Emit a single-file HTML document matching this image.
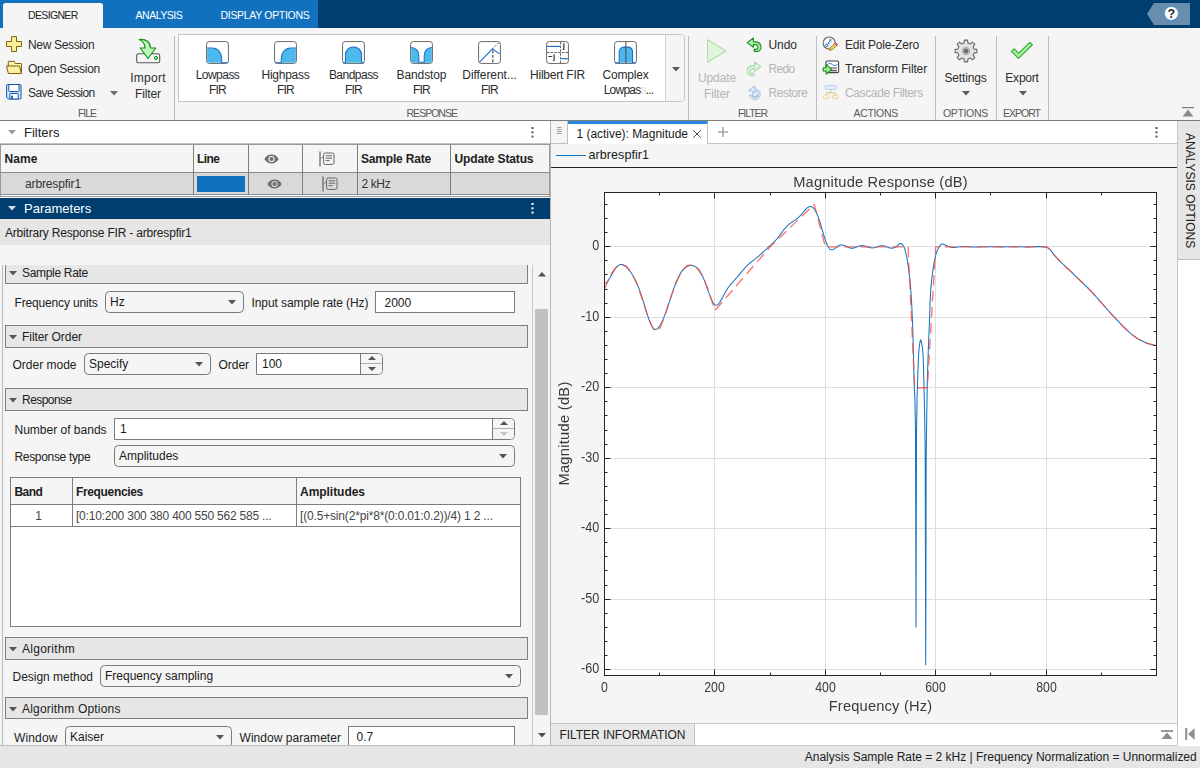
<!DOCTYPE html>
<html lang="en"><head>
<meta charset="utf-8">
<title>Filter Designer</title>
<style>
*{box-sizing:border-box;margin:0;padding:0}
html,body{width:1200px;height:768px;overflow:hidden}
body{position:relative;background:#f5f5f5;font-family:"Liberation Sans",sans-serif;font-size:12px;color:#212121}
.a{position:absolute}
.t{position:absolute;white-space:nowrap;line-height:16px;height:16px}
.c{text-align:center}
svg{position:absolute;overflow:visible}
/* tab strip */
#tabs{left:0;top:0;width:1200px;height:28px;background:#003e70}
#tabsblue{left:0;top:0;width:318px;height:28px;background:#1171be}
#tabact{left:3px;top:3px;width:100px;height:25px;background:#f5f5f5;border-radius:2.5px 2.5px 0 0}
.tabt{color:#fff;font-size:10.5px;top:7px}
/* ribbon */
#ribbon{left:0;top:28px;width:1200px;height:93px;background:#f5f5f5;border-bottom:1px solid #7d7d7d;color:#2c2c2c}
.vsep{position:absolute;top:8px;width:1px;height:84px;background:#bdbdbd}
.sec{color:#5a5a5a;font-size:10.5px;top:77px}
.dis{color:#b4b4b4}
#gal{left:178px;top:6px;width:507px;height:68px;border:1px solid #c4c4c4;border-radius:0 4px 4px 0;background:#fff}
#galbtn{right:0;top:0;width:19px;height:66px;background:#f5f5f5;border-left:1px solid #d0d0d0;border-radius:0 3px 3px 0}
.gi{position:absolute;top:6px;width:23px;height:23px}
/* panels */
#left{left:0;top:0;width:551px;height:746px;overflow:hidden}
#right{left:0;top:0;width:1177px;height:746px;overflow:hidden}
#side{left:1177px;top:121px;width:23px;height:625px;background:#fff;border-left:1px solid #c6c6c6}
.sh{position:absolute;left:5px;width:523px;height:23px;background:#e6e6e6;border:1px solid #7f7f7f}
.sh svg{left:3.3px;top:8.5px}
.sh .t{left:16px;top:2.5px}
.dd{position:absolute;height:22px;border:1px solid #7a7a7a;border-radius:4.5px;background:#f5f5f5}
.dd .t{left:4px;top:1.5px;color:#1a1a1a}
.dd svg{right:7.5px;top:7.8px}
.tf{position:absolute;height:22px;border:1px solid #7a7a7a;background:#fff}
.tf .t{top:2px;color:#1a1a1a}
.spb{position:absolute;right:0;top:0;width:22px;height:20px;border-left:1px solid #7a7a7a;background:#f5f5f5;border-radius:0 4px 4px 0}
.spb i{position:absolute;left:0;top:9px;width:21px;height:1px;background:#b0b0b0}
.b{font-weight:bold}
.hl{position:absolute;height:1px;background:#7d7d7d}
.vl{position:absolute;width:1px;background:#7d7d7d}
#status{left:0;top:746px;width:1200px;height:22px;background:#e6e6e6}
</style>
</head>
<body>
<!--TABS-->
<div id="tabs" class="a">
  <div id="tabsblue" class="a"></div>
  <div id="tabact" class="a"></div>
  <div class="t" style="left: 28px; top: 7px; color: rgb(34, 34, 34); font-size: 10.5px; letter-spacing: -0.65px;">DESIGNER</div>
  <div class="t tabt" style="left: 135.5px; letter-spacing: -0.48px;">ANALYSIS</div>
  <div class="t tabt" style="left: 220.5px; letter-spacing: -0.31px;">DISPLAY OPTIONS</div>
  <svg style="left:1146px;top:3px" width="45" height="22" viewBox="0 0 45 22">
    <path d="M1 11 L8 0 H44 V22 H8 Z" fill="#688daf"></path>
    <circle cx="25.4" cy="10.4" r="7" fill="#fff" stroke="#3b8ad6" stroke-width="0.8"></circle>
    <text x="25.4" y="14.6" font-size="12.5" font-weight="bold" text-anchor="middle" fill="#222" font-family="Liberation Sans, sans-serif">?</text>
  </svg>
</div>
<!--RIBBON-->
<div id="ribbon" class="a">
  <!-- FILE section (coords relative to ribbon top=28) -->
  <svg style="left:6.2px;top:8px" width="16" height="16" viewBox="0 0 16 16"><path d="M5.5.6h5v4.9h5v5h-5v5h-5v-5h-5v-5h5z" fill="#fdee9c" stroke="#7f6108" stroke-width="1" stroke-linejoin="round"></path></svg>
  <div class="t" style="left: 28px; top: 8.5px; letter-spacing: -0.34px;">New Session</div>
  <svg style="left:6px;top:32px" width="16" height="16" viewBox="0 0 16 16"><path d="M2.3 6.4V1.8a.5.5 0 0 1 .5-.5h5.4L9.2 3.5h5.8a.5.5 0 0 1 .5.5v9.4" fill="#fdf2ae" stroke="#7f6108" stroke-width="1" stroke-linejoin="round"></path><path d="M.5 6h13L15.4 13.5H2.4z" fill="#fdf0a6" stroke="#7f6108" stroke-width="1" stroke-linejoin="round"></path></svg>
  <div class="t" style="left: 28px; top: 32.5px; letter-spacing: -0.29px;">Open Session</div>
  <svg style="left:6px;top:56px" width="16" height="16" viewBox="0 0 16 16"><path d="M1.4.5h12.8a.8.8 0 0 1 .8.8v12.9a.8.8 0 0 1-.8.8H2.3L.6 13.2V1.3a.8.8 0 0 1 .8-.8z" fill="#cfe6fb" stroke="#1557b0" stroke-width="1" stroke-linejoin="round"></path><path d="M2.8.5v6.4a.6.6 0 0 0 .6.6h9a.6.6 0 0 0 .6-.6V.5z" fill="#fff" stroke="#1557b0" stroke-width="1"></path><path d="M3.8 15v-4.9a.6.6 0 0 1 .6-.6h7.2a.6.6 0 0 1 .6.6V15z" fill="#fff" stroke="#1557b0" stroke-width="1"></path><rect x="5.1" y="11.6" width="1.8" height="3.2" fill="#1557b0"></rect></svg>
  <div class="t" style="left: 28px; top: 56.5px; letter-spacing: -0.56px;">Save Session</div>
  <svg style="left:109.7px;top:62.5px" width="8" height="5" viewBox="0 0 8 5"><path d="M0 0h8L4 4.6z" fill="#6a6a6a"></path></svg>
  <!-- Import Filter -->
  <svg style="left:135px;top:10px" width="26" height="26" viewBox="0 0 26 26"><rect x="1.7" y="15.7" width="23" height="9.1" rx="1.8" fill="#f5f5f5" stroke="#5a5a5a" stroke-width="1.1"></rect><circle cx="21" cy="20" r="1.6" fill="#8fe78f" stroke="#1a961a" stroke-width="1"></circle><path d="M4.2 1.5C11 .7 15.3 4 15.5 10H20.8L13 20.5 5.2 10H10C9.8 6 8 3 4.2 1.5z" fill="#bff5b6" stroke="#12901a" stroke-width="1.1" stroke-linejoin="round"></path></svg>
  <div class="t c" style="left: 118px; width: 60px; top: 42px; letter-spacing: 0.27px;">Import</div>
  <div class="t c" style="left: 118px; width: 60px; top: 57.5px; letter-spacing: -0.12px;">Filter</div>
  <div class="t sec" style="left: 78px; letter-spacing: -1.05px;">FILE</div>
  <div class="vsep" style="left:174px"></div>
  <!-- gallery -->
  <div id="gal" class="a">
    <div id="galbtn" class="a"><svg style="left:5.5px;top:31.5px" width="8" height="5" viewBox="0 0 8 5"><path d="M0 0h8L4 4.6z" fill="#5a5a5a"></path></svg></div>
        <!-- gallery coords relative to gal box (left 178+1 border, top 34+1) ; item centers at page x 217.5+68k -->
    <svg class="gi" style="left:27.0px" viewBox="0 0 24 24"><rect x=".6" y=".6" width="22.8" height="22.8" rx="2.8" fill="#fff" stroke="#636363" stroke-width="1"></rect><path d="M1.2 7.6h5.4c5.6 0 9.8 4.4 9.8 10.4v4.8H3.2a2 2 0 0 1-2-2z" fill="#4db8ec"></path><path d="M1.2 7.4h5.4c5.6 0 9.8 4.6 9.8 10.6v4.6h6.4" fill="none" stroke="#1b70c4" stroke-width="1.1"></path></svg>
    <div class="t c" style="left: 3.5px; width: 70px; top: 31.5px; letter-spacing: -0.52px;">Lowpass</div>
    <div class="t c" style="left: 3.5px; width: 70px; top: 46.5px; letter-spacing: -0.74px;">FIR</div>

    <svg class="gi" style="left:95.0px" viewBox="0 0 24 24"><rect x=".6" y=".6" width="22.8" height="22.8" rx="2.8" fill="#fff" stroke="#636363" stroke-width="1"></rect><path d="M22.8 7.6h-5.4c-5.6 0-9.8 4.4-9.8 10.4v4.8h13.2a2 2 0 0 0 2-2z" fill="#4db8ec"></path><path d="M22.8 7.4h-5.4c-5.6 0-9.8 4.6-9.8 10.6v4.6H1.2" fill="none" stroke="#1b70c4" stroke-width="1.1"></path></svg>
    <div class="t c" style="left: 71.5px; width: 70px; top: 31.5px; letter-spacing: -0.27px;">Highpass</div>
    <div class="t c" style="left: 71.5px; width: 70px; top: 46.5px; letter-spacing: -0.74px;">FIR</div>

    <svg class="gi" style="left:163.0px" viewBox="0 0 24 24"><rect x=".6" y=".6" width="22.8" height="22.8" rx="2.8" fill="#fff" stroke="#636363" stroke-width="1"></rect><path d="M3.6 22.8v-8.2c0-5 3.6-8.4 8.4-8.4s8.4 3.4 8.4 8.4v8.2z" fill="#4db8ec"></path><path d="M1.2 22.8h2.4v-8.2c0-5 3.6-8.4 8.4-8.4s8.4 3.4 8.4 8.4v8.2h2.4" fill="none" stroke="#1b70c4" stroke-width="1.1"></path></svg>
    <div class="t c" style="left: 139.5px; width: 70px; top: 31.5px; letter-spacing: -0.52px;">Bandpass</div>
    <div class="t c" style="left: 139.5px; width: 70px; top: 46.5px; letter-spacing: -0.74px;">FIR</div>

    <svg class="gi" style="left:231.0px" viewBox="0 0 24 24"><rect x=".6" y=".6" width="22.8" height="22.8" rx="2.8" fill="#fff" stroke="#636363" stroke-width="1"></rect><path d="M1.2 6.8c5 0 8 3.8 8 9v6.4h5.6v-6.4c0-5.2 3-9 8-9v14a2 2 0 0 1-2 2H3.2a2 2 0 0 1-2-2z" fill="#4db8ec"></path><path d="M1.2 6.8c5 0 8 3.8 8 9v6.4h5.6v-6.4c0-5.2 3-9 8-9" fill="none" stroke="#1b70c4" stroke-width="1.1"></path></svg>
    <div class="t c" style="left: 207.5px; width: 70px; top: 31.5px; letter-spacing: -0.1px;">Bandstop</div>
    <div class="t c" style="left: 207.5px; width: 70px; top: 46.5px; letter-spacing: -0.74px;">FIR</div>

    <svg class="gi" style="left:299.0px" viewBox="0 0 24 24"><rect x=".6" y=".6" width="22.8" height="22.8" rx="2.8" fill="#fff" stroke="#636363" stroke-width="1"></rect><path d="M1.6 22L15 8.4l7.6 5" fill="none" stroke="#1b70c4" stroke-width="1.1"></path><path d="M15 8.4L21.6 1.8" fill="none" stroke="#1b70c4" stroke-width="1" stroke-dasharray="2.2 1.4"></path><path d="M15.5 10v12.6" fill="none" stroke="#222" stroke-width="1" stroke-dasharray="3 1.6"></path></svg>
    <div class="t c" style="left: 275.5px; width: 70px; top: 31.5px; letter-spacing: -0.06px;">Different...</div>
    <div class="t c" style="left: 275.5px; width: 70px; top: 46.5px; letter-spacing: -0.74px;">FIR</div>

    <svg class="gi" style="left:367.0px" viewBox="0 0 24 24"><rect x=".6" y=".6" width="22.8" height="22.8" rx="2.8" fill="#fff" stroke="#636363" stroke-width="1"></rect><path d="M15.2 1v22" stroke="#5a5a5a" stroke-width="1" stroke-dasharray="2.6 1.3"></path><path d="M1 12h22" stroke="#5a5a5a" stroke-width="1" stroke-dasharray="2.6 1.3"></path><path d="M1.2 5.6H14.6" stroke="#0f6fc0" stroke-width="1.2"></path><path d="M15.8 18.5h7" stroke="#0f6fc0" stroke-width="1.2"></path><text x="17.6" y="7.7" font-size="8" font-weight="bold" fill="#1a1a1a" font-family="Liberation Sans, sans-serif">j</text><text x="2" y="19.2" font-size="8" font-weight="bold" fill="#1a1a1a" font-family="Liberation Sans, sans-serif" style="letter-spacing:.6px">−j</text></svg>
    <div class="t c" style="left: 343.5px; width: 70px; top: 31.5px; letter-spacing: -0.22px;">Hilbert FIR</div>

    <svg class="gi" style="left:435.0px" viewBox="0 0 24 24"><rect x=".6" y=".6" width="22.8" height="22.8" rx="2.8" fill="#fff" stroke="#636363" stroke-width="1"></rect><path d="M5.4 22.8v-11c0-3.4 1.8-5.4 5-5.4h4c3.2 0 5 2 5 5.4v11z" fill="#4db8ec"></path><path d="M1.2 22.8h4.2v-11c0-3.4 1.8-5.4 5-5.4h4c3.2 0 5 2 5 5.4v11h3.4" fill="none" stroke="#1b70c4" stroke-width="1.1"></path><path d="M12.4 1v22" stroke="#444" stroke-width="1"></path></svg>
    <div class="t c" style="left: 411.5px; width: 70px; top: 31.5px; letter-spacing: -0.21px;">Complex</div>
    <div class="t c" style="left: 414.5px; width: 70px; top: 46.5px; letter-spacing: -0.78px;">Lowpas<span style="color:#dcdcdc">s</span>...</div>

  </div>
  <div class="t sec" style="left: 406.5px; letter-spacing: -0.98px;">RESPONSE</div>
  <div class="vsep" style="left:688px"></div>
  <!-- FILTER section -->
  <svg style="left:706px;top:10px" width="22" height="26" viewBox="0 0 22 26"><path d="M1.6 1.8L20 13 1.6 24.2z" fill="#e0f5dc" stroke="#b0dcaa" stroke-width="1.1" stroke-linejoin="round"></path></svg>
  <div class="t c dis" style="left: 687px; width: 60px; top: 42px; letter-spacing: -0.13px;">Update</div>
  <div class="t c dis" style="left: 687px; width: 60px; top: 57.5px; letter-spacing: -0.12px;">Filter</div>
  <svg style="left:746px;top:9px" width="17" height="16" viewBox="0 0 17 16"><path d="M7.4 1L1.2 5.6l6.2 4.6V7.4c2.6 0 4.6.8 4.6 2.8 0 1.4-1 2.2-2.4 2.2-.8 0-1.2-.3-1.2-.3l-.4 2s1 .5 2.2.5c2.8 0 4.8-1.8 4.8-4.6 0-3.4-3-5.4-7.6-5.4z" fill="#a9f0a9" stroke="#228b22" stroke-width="1.1" stroke-linejoin="round"></path></svg>
  <div class="t" style="left: 768.5px; top: 8.5px; letter-spacing: -0.05px;">Undo</div>
  <svg style="left:745px;top:33px" width="17" height="16" viewBox="0 0 17 16"><path d="M9.6 1l6.2 4.6-6.2 4.6V7.4C7 7.4 5 8.2 5 10.2c0 1.4 1 2.2 2.4 2.2.8 0 1.2-.3 1.2-.3l.4 2s-1 .5-2.2.5C4 14.6 2 12.8 2 10c0-3.4 3-5.4 7.6-5.4z" fill="#dcf5dc" stroke="#a8d8a8" stroke-width="1.1" stroke-linejoin="round"></path></svg>
  <div class="t dis" style="left: 768.5px; top: 32.5px; letter-spacing: -0.63px;">Redo</div>
  <svg style="left:747px;top:57px" width="16" height="16" viewBox="0 0 16 16"><path d="M7.3 3.8A5.4 5.4 0 1 1 2.5 10.1L4.5 9.8A3.4 3.4 0 1 0 7.5 5.8z" fill="#dbe8f8" stroke="#a5c2e6" stroke-width="1" stroke-linejoin="round"></path><path d="M1.6 5.4L7.8.7l.5 7z" fill="#dbe8f8" stroke="#a5c2e6" stroke-width="1" stroke-linejoin="round"></path><path d="M10 9.6a2.1 2.1 0 1 1-2.2-2.2" fill="none" stroke="#a5c2e6" stroke-width="1.3"></path></svg>
  <div class="t dis" style="left: 768.5px; top: 56.5px; letter-spacing: -0.47px;">Restore</div>
  <div class="t sec" style="left: 738px; letter-spacing: -1.07px;">FILTER</div>
  <div class="vsep" style="left:816px"></div>
  <!-- ACTIONS -->
  <svg style="left:822.4px;top:8.3px" width="17" height="17" viewBox="0 0 17 17"><circle cx="7.2" cy="7" r="6" fill="#fff" stroke="#666" stroke-width="1.1"></circle><path d="M1.4 7h11.6M7.2 1.2v11.6" stroke="#9cc3ea" stroke-width=".7" stroke-dasharray="1.5 1"></path><path d="M5 9.2l3.6-5" stroke="#1b70c4" stroke-width="1"></path><circle cx="4.8" cy="9.4" r="1.2" fill="#fff" stroke="#1b70c4" stroke-width=".9"></circle><path d="M7.6 3.2l1.8 1.6M9.4 3.2L7.6 4.8" stroke="#1b70c4" stroke-width=".9"></path><path d="M7.4 14.4l1-2.8 5-4.6 1.9 1.9-5 4.6z" fill="#f6d65a" stroke="#9c7b13" stroke-width=".9" stroke-linejoin="round"></path><path d="M12.6 7.6l.9-.9 2 1.9-.9.9z" fill="#f05a6e" stroke="#c43a4e" stroke-width=".7"></path></svg>
  <div class="t" style="left: 845px; top: 8.5px; letter-spacing: -0.2px;">Edit Pole-Zero</div>
  <svg style="left:822px;top:32px" width="18" height="16" viewBox="0 0 18 16"><rect x="4" y="1" width="12.6" height="11.6" rx="1.2" fill="#fff" stroke="#444" stroke-width="1.1"></rect><path d="M5 5.2c2-2.4 3.6-2 5.4-.6s3.4 1.6 5.4-.8" fill="none" stroke="#1b70c4" stroke-width="1"></path><rect x="7.6" y="7.4" width="7.4" height="1.2" fill="#666"></rect><rect x="7.6" y="9.8" width="7.4" height="1.6" fill="#666"></rect><path d="M1.2 7.8h3V4.6L9.6 9.4 4.2 14.2V11h-3z" fill="#a4ef9c" stroke="#1c8c1c" stroke-width="1.1" stroke-linejoin="round"></path></svg>
  <div class="t" style="left: 845px; top: 32.5px; letter-spacing: -0.14px;">Transform Filter</div>
  <svg style="left:823px;top:57px" width="16" height="15" viewBox="0 0 16 15"><path d="M7.8 4.4v3.4M3.4 10V7.8h9V10" fill="none" stroke="#cfc39a" stroke-width="1"></path><rect x="2" y=".6" width="11.6" height="3.8" rx=".8" fill="#e4eefb" stroke="#b5cdec" stroke-width=".9"></rect><rect x=".6" y="10" width="5.6" height="3.6" rx=".8" fill="#fbf3d2" stroke="#e2d4a0" stroke-width=".9"></rect><rect x="9.4" y="10" width="5.6" height="3.6" rx=".8" fill="#fbf3d2" stroke="#e2d4a0" stroke-width=".9"></rect></svg>
  <div class="t dis" style="left: 845px; top: 56.5px; letter-spacing: -0.37px;">Cascade Filters</div>
  <div class="t sec" style="left: 853.5px; letter-spacing: -0.33px;">ACTIONS</div>
  <div class="vsep" style="left:935px"></div>
  <!-- OPTIONS -->
  <svg style="left:953.5px;top:10.6px" width="24" height="24" viewBox="-12 -12 24 24"><path d="M-1.89 -8.08 L-1.64 -10.88 L1.64 -10.88 L1.89 -8.08 L4.38 -7.05 L6.53 -8.85 L8.85 -6.53 L7.05 -4.38 L8.08 -1.89 L10.88 -1.64 L10.88 1.64 L8.08 1.89 L7.05 4.38 L8.85 6.53 L6.53 8.85 L4.38 7.05 L1.89 8.08 L1.64 10.88 L-1.64 10.88 L-1.89 8.08 L-4.38 7.05 L-6.53 8.85 L-8.85 6.53 L-7.05 4.38 L-8.08 1.89 L-10.88 1.64 L-10.88 -1.64 L-8.08 -1.89 L-7.05 -4.38 L-8.85 -6.53 L-6.53 -8.85 L-4.38 -7.05Z" fill="#e4e4e4" stroke="#636363" stroke-width="1.05" stroke-linejoin="round"></path><circle r="4.3" fill="#b4b4b4"></circle><circle r="2.3" fill="#6a6a6a"></circle></svg>
  <div class="t c" style="left: 935px; width: 61px; top: 42px; letter-spacing: -0.18px;">Settings</div>
  <svg style="left:961.5px;top:63px" width="8" height="5" viewBox="0 0 8 5"><path d="M0 0h8L4 4.6z" fill="#5a5a5a"></path></svg>
  <div class="t sec" style="left: 943px; letter-spacing: -0.35px;">OPTIONS</div>
  <div class="vsep" style="left:996px"></div>
  <!-- EXPORT -->
  <svg style="left:1010px;top:13px" width="24" height="19" viewBox="0 0 24 19"><path d="M1.4 10.4l2.6-2.6 4.6 4.4L19.8 1.4l2.6 2.4L8.6 17.4z" fill="#a6f0a0" stroke="#3fae3f" stroke-width="1.2" stroke-linejoin="round"></path></svg>
  <div class="t c" style="left: 996px; width: 52px; top: 42px; letter-spacing: -0.22px;">Export</div>
  <svg style="left:1018.5px;top:63px" width="8" height="5" viewBox="0 0 8 5"><path d="M0 0h8L4 4.6z" fill="#5a5a5a"></path></svg>
  <div class="t sec" style="left: 1003px; letter-spacing: -1px;">EXPORT</div>
  <div class="vsep" style="left:1048px"></div>
  <!-- collapse -->
  <svg style="left:1182px;top:79px" width="12" height="10" viewBox="0 0 12 10"><path d="M0 .6h12" stroke="#777" stroke-width="1.2"></path><path d="M6 2.6L11.4 9.4H.6z" fill="#8a8a8a"></path></svg>

</div>
<!--LEFT-->
<div id="left" class="a">
  <!-- Filters header -->
  <div class="a" style="left:0;top:121px;width:550px;height:23px;background:#fff"></div>
  <svg style="left:8px;top:130px" width="8" height="5" viewBox="0 0 8 5"><path d="M0 0h8L4 4.4z" fill="#9a9a9a"></path></svg>
  <div class="t" style="left:24px;top:124.6px;font-size:13px;color:#222">Filters</div>
  <svg style="left:530.5px;top:127px" width="3" height="11" viewBox="0 0 3 11"><rect x=".5" y="0" width="2" height="2" fill="#555"></rect><rect x=".5" y="4.3" width="2" height="2" fill="#555"></rect><rect x=".5" y="8.6" width="2" height="2" fill="#555"></rect></svg>
  <!-- Filters table -->
  <div class="a" style="left:0;top:143px;width:550px;height:54px;background:#fff;border:1px solid #9a9a9a;border-top:none"></div>
  <div class="hl" style="left:0;top:143px;width:550px;background:#c3c3c3"></div>
  <div class="hl" style="left:0;top:144px;width:550px;background:#9a9a9a"></div>
  <div class="a" style="left:1px;top:145px;width:548px;height:27px;background:#f5f5f5"></div>
  <div class="a" style="left:1px;top:172.6px;width:548px;height:22.1px;background:#d9d9d9;border-bottom:1px solid #8c8c8c"></div>
  <div class="hl" style="left:0;top:171.7px;width:550px;background:#8c8c8c"></div>
  <div class="vl" style="left:193px;top:145px;height:49.5px"></div>
  <div class="vl" style="left:248px;top:145px;height:49.5px"></div>
  <div class="vl" style="left:302px;top:145px;height:49.5px"></div>
  <div class="vl" style="left:357px;top:145px;height:49.5px"></div>
  <div class="vl" style="left:450px;top:145px;height:49.5px"></div>
  <div class="t b" style="left: 4.5px; top: 150.5px; letter-spacing: 0.09px;">Name</div>
  <div class="t b" style="left: 197px; top: 150.5px; letter-spacing: -0.62px;">Line</div>
  <div class="t b" style="left: 361px; top: 150.5px; letter-spacing: -0.19px;">Sample Rate</div>
  <div class="t b" style="left: 454.5px; top: 150.5px; letter-spacing: -0.14px;">Update Status</div>
  <div class="t" style="left: 25px; top: 175.5px; color: rgb(51, 51, 51); letter-spacing: -0.13px;">arbrespfir1</div>
  <div class="t" style="left: 361.5px; top: 175.5px; color: rgb(51, 51, 51); letter-spacing: -0.38px;">2 kHz</div>
  <div class="a" style="left:197px;top:176px;width:48px;height:16px;background:#1171be"></div>
  <!-- eye icons -->
  <svg style="left:264px;top:153.5px" width="15" height="10" viewBox="0 0 15 10"><path d="M.3 5C2 2 4.6.6 7.5.6S13 2 14.7 5C13 8 10.4 9.4 7.5 9.4S2 8 .3 5z" fill="#6e6e6e"></path><circle cx="7.5" cy="5" r="3.1" fill="#f5f5f5"></circle><circle cx="7.5" cy="5" r="2" fill="#6e6e6e"></circle></svg>
  <svg style="left:267px;top:178.5px" width="15" height="10" viewBox="0 0 15 10"><path d="M.3 5C2 2 4.6.6 7.5.6S13 2 14.7 5C13 8 10.4 9.4 7.5 9.4S2 8 .3 5z" fill="#6e6e6e"></path><circle cx="7.5" cy="5" r="3.1" fill="#d9d9d9"></circle><circle cx="7.5" cy="5" r="2" fill="#6e6e6e"></circle></svg>
  <!-- legend/list icons -->
  <svg style="left:318.5px;top:151px" width="16" height="16" viewBox="0 0 16 16"><path d="M1 .4v15.2" stroke="#555" stroke-width="1.1"></path><path d="M1.4 7.5l3-1.5" stroke="#666" stroke-width=".8"></path><rect x="4.6" y="2" width="10.4" height="11.4" rx="1.6" fill="none" stroke="#666" stroke-width="1"></rect><path d="M6.6 4.8h6.6M6.6 7.2h6.6M6.6 9.6h4" stroke="#666" stroke-width="1"></path></svg>
  <svg style="left:321.5px;top:176px" width="16" height="16" viewBox="0 0 16 16"><path d="M1 .4v15.2" stroke="#555" stroke-width="1.1"></path><path d="M1.4 7.5l3-1.5" stroke="#666" stroke-width=".8"></path><rect x="4.6" y="2" width="10.4" height="11.4" rx="1.6" fill="none" stroke="#666" stroke-width="1"></rect><path d="M6.6 4.8h6.6M6.6 7.2h6.6M6.6 9.6h4" stroke="#666" stroke-width="1"></path></svg>
  <!-- Parameters header -->
  <div class="a" style="left:0;top:198px;width:550px;height:21px;background:#003e70"></div>
  <svg style="left:8px;top:206px" width="8" height="5" viewBox="0 0 8 5"><path d="M0 0h8L4 4.4z" fill="#d8dee6"></path></svg>
  <div class="t" style="left:24px;top:200.5px;font-size:13px;color:#fff">Parameters</div>
  <svg style="left:530.5px;top:203px" width="3" height="11" viewBox="0 0 3 11"><rect x=".5" y="0" width="2" height="2" fill="#fff"></rect><rect x=".5" y="4.3" width="2" height="2" fill="#fff"></rect><rect x=".5" y="8.6" width="2" height="2" fill="#fff"></rect></svg>
  <div class="a" style="left:0;top:219px;width:550px;height:26px;background:#e6e6e6"></div>
  <div class="t" style="left: 5px; top: 224.5px; letter-spacing: -0.19px;">Arbitrary Response FIR - arbrespfir1</div>
  <!-- scroll container borders -->
  <div class="vl" style="left:2px;top:265px;height:481px;background:#b9b9b9"></div>
  <div class="vl" style="left:532px;top:265px;height:481px;background:#c9c9c9"></div>
  <div class="vl" style="left:550px;top:121px;height:625px;background:#b4b4b4"></div>
  <div class="hl" style="left:0;top:745px;width:550px;background:#bcbcbc;z-index:3"></div>
  <!-- scrollbar -->
  <div class="a" style="left:535px;top:309px;width:13px;height:406px;background:#c1c1c1"></div>
  <svg style="left:537.5px;top:271.5px" width="8" height="5" viewBox="0 0 8 5"><path d="M0 4.6h8L4 0z" fill="#505050"></path></svg>
  <svg style="left:537.5px;top:733px" width="8" height="5" viewBox="0 0 8 5"><path d="M0 0h8L4 4.6z" fill="#505050"></path></svg>
  <!-- clipped region for scrolling content -->
  <div class="a" style="left:0;top:265px;width:531px;height:481px;overflow:hidden">
   <div class="a" style="left:0;top:-265px;width:531px;height:800px">
    <!-- Sample Rate -->
    <div class="sh" style="top:261px"><svg width="8" height="5" viewBox="0 0 8 5"><path d="M0 0h8L4 4.4z" fill="#555"></path></svg><div class="t" style="letter-spacing: -0.32px;">Sample Rate</div></div>
    <div class="t" style="left: 14.5px; top: 295px; letter-spacing: -0.16px;">Frequency units</div>
    <div class="dd" style="left:105px;top:291px;width:139px"><div class="t">Hz</div><svg width="8" height="5" viewBox="0 0 8 5"><path d="M0 0h8L4 4.4z" fill="#555"></path></svg></div>
    <div class="t" style="left: 251.5px; top: 295px; letter-spacing: -0.08px;">Input sample rate (Hz)</div>
    <div class="tf" style="left:375px;top:291px;width:140px"><div class="t" style="left:8.5px;top:2.8px">2000</div></div>
    <!-- Filter Order -->
    <div class="sh" style="top:325px"><svg width="8" height="5" viewBox="0 0 8 5"><path d="M0 0h8L4 4.4z" fill="#555"></path></svg><div class="t" style="letter-spacing: -0.06px;">Filter Order</div></div>
    <div class="t" style="left: 12.5px; top: 357px; letter-spacing: 0px;">Order mode</div>
    <div class="dd" style="left:84px;top:353px;width:127px"><div class="t">Specify</div><svg width="8" height="5" viewBox="0 0 8 5"><path d="M0 0h8L4 4.4z" fill="#555"></path></svg></div>
    <div class="t" style="left: 218.5px; top: 357px; letter-spacing: -0.04px;">Order</div>
    <div class="tf" style="left:256px;top:353px;width:127px;border-radius:0 4.5px 4.5px 0"><div class="t" style="left:5px">100</div><div class="spb"><i></i><svg style="left:6.5px;top:2.3px" width="8" height="4" viewBox="0 0 8 4"><path d="M0 4h8L4 0z" fill="#555"></path></svg><svg style="left:6.5px;top:12.8px" width="8" height="4" viewBox="0 0 8 4"><path d="M0 0h8L4 4z" fill="#555"></path></svg></div></div>
    <!-- Response -->
    <div class="sh" style="top:388px"><svg width="8" height="5" viewBox="0 0 8 5"><path d="M0 0h8L4 4.4z" fill="#555"></path></svg><div class="t" style="letter-spacing: -0.54px;">Response</div></div>
    <div class="t" style="left: 14.5px; top: 422px; letter-spacing: 0px;">Number of bands</div>
    <div class="tf" style="left:114px;top:418px;width:401px;border-radius:0 4.5px 4.5px 0"><div class="t" style="left:5px">1</div><div class="spb"><i></i><svg style="left:6.5px;top:2.3px" width="8" height="4" viewBox="0 0 8 4"><path d="M0 4h8L4 0z" fill="#555"></path></svg><svg style="left:6.5px;top:12.8px" width="8" height="4" viewBox="0 0 8 4"><path d="M0 0h8L4 4z" fill="#c4c4c4"></path></svg></div></div>
    <div class="t" style="left: 14.5px; top: 449px; letter-spacing: -0.33px;">Response type</div>
    <div class="dd" style="left:114px;top:445px;width:401px"><div class="t">Amplitudes</div><svg width="8" height="5" viewBox="0 0 8 5"><path d="M0 0h8L4 4.4z" fill="#555"></path></svg></div>
    <!-- table -->
    <div class="a" style="left:10px;top:477px;width:511px;height:150px;background:#fff;border:1px solid #7d7d7d"></div>
    <div class="a" style="left:11px;top:478px;width:509px;height:26px;background:#f5f5f5"></div>
    <div class="hl" style="left:10px;top:504px;width:511px"></div>
    <div class="hl" style="left:10px;top:526px;width:511px"></div>
    <div class="vl" style="left:72px;top:478px;height:49px"></div>
    <div class="vl" style="left:296px;top:478px;height:49px"></div>
    <div class="t b" style="left: 14.5px; top: 483.5px; letter-spacing: -0.57px;">Band</div>
    <div class="t b" style="left: 76px; top: 483.5px; letter-spacing: -0.35px;">Frequencies</div>
    <div class="t b" style="left: 300px; top: 483.5px; letter-spacing: -0.04px;">Amplitudes</div>
    <div class="t c" style="left:11px;width:55px;top:508px;color:#444">1</div>
    <div class="t" style="left: 76px; top: 508px; color: rgb(68, 68, 68); letter-spacing: -0.22px;">[0:10:200 300 380 400 550 562 585 ...</div>
    <div class="t" style="left: 300px; top: 508px; color: rgb(68, 68, 68); letter-spacing: -0.17px;">[(0.5+sin(2*pi*8*(0:0.01:0.2))/4) 1 2 ...</div>
    <!-- Algorithm -->
    <div class="sh" style="top:637px"><svg width="8" height="5" viewBox="0 0 8 5"><path d="M0 0h8L4 4.4z" fill="#555"></path></svg><div class="t" style="letter-spacing: 0.27px;">Algorithm</div></div>
    <div class="t" style="left: 12.5px; top: 669px; letter-spacing: -0.02px;">Design method</div>
    <div class="dd" style="left:100px;top:665px;width:421px"><div class="t">Frequency sampling</div><svg width="8" height="5" viewBox="0 0 8 5"><path d="M0 0h8L4 4.4z" fill="#555"></path></svg></div>
    <!-- Algorithm Options -->
    <div class="sh" style="top:697px;height:22px"><svg width="8" height="5" viewBox="0 0 8 5"><path d="M0 0h8L4 4.4z" fill="#555"></path></svg><div class="t" style="letter-spacing: 0.19px;">Algorithm Options</div></div>
    <div class="t" style="left: 14px; top: 729.5px; letter-spacing: 0.15px;">Window</div>
    <div class="dd" style="left:65px;top:726px;width:167px"><div class="t">Kaiser</div><svg width="8" height="5" viewBox="0 0 8 5"><path d="M0 0h8L4 4.4z" fill="#555"></path></svg></div>
    <div class="t" style="left: 239.5px; top: 729.5px; letter-spacing: 0.05px;">Window parameter</div>
    <div class="tf" style="left:348px;top:726px;width:166.5px"><div class="t" style="left:7.5px">0.7</div></div>
   </div>
  </div>

</div>
<!--RIGHT-->
<div id="right" class="a">
  <!-- tab bar -->
  <div class="a" style="left:551px;top:121px;width:626px;height:23px;background:#fff;border-bottom:1px solid #c6c6c6"></div>
  <div class="a" style="left:551px;top:121px;width:17px;height:23px;background:#f5f5f5;border-right:1px solid #c0c0c0;border-bottom:1px solid #c0c0c0"></div>
  <svg style="left:557px;top:127px" width="5" height="7" viewBox="0 0 5 7"><path d="M0 .5h4.6M0 2.5h4.6M0 4.5h4.6M0 6.5h4.6" stroke="#8a8a8a" stroke-width=".8"></path></svg>
  <div class="a" style="left:568px;top:121px;width:140px;height:23px;background:#fff;border-right:1px solid #bdbdbd;border-top:3px solid #2688d9"></div>
  <div class="t" style="left: 576.5px; top: 125.5px; color: rgb(26, 26, 26); letter-spacing: -0.03px;">1 (active): Magnitude</div>
  <svg style="left:693px;top:130px" width="8" height="8" viewBox="0 0 8 8"><path d="M.3.3l7.4 7.4M7.7.3L.3 7.700000000000001" stroke="#333" stroke-width=".9"></path></svg>
  <svg style="left:718px;top:127px" width="10" height="10" viewBox="0 0 10 10"><path d="M5 0v10M0 5h10" stroke="#a8a8a8" stroke-width="1.6"></path></svg>
  <svg style="left:1154.5px;top:127px" width="3" height="11" viewBox="0 0 3 11"><rect x=".5" y="0" width="2" height="2" fill="#555"></rect><rect x=".5" y="4.3" width="2" height="2" fill="#555"></rect><rect x=".5" y="8.6" width="2" height="2" fill="#555"></rect></svg>
  <!-- legend strip -->
  <div class="a" style="left:556px;top:154.5px;width:30px;height:1.3px;background:#1171be"></div>
  <div class="t" style="left: 588.5px; top: 146.5px; font-size: 12.6px; color: rgb(34, 34, 34); letter-spacing: 0.03px;">arbrespfir1</div>
  <div class="a" style="left:551px;top:167px;width:626px;height:1.2px;background:#222"></div>
  <!-- plot -->
<svg style="left:0;top:0;will-change:transform" width="1177" height="746" viewBox="0 0 1177 746" font-family="Liberation Sans, sans-serif" fill="#3a3a3a">
<rect x="604.5" y="192.5" width="552.0" height="483.0" fill="#fff"></rect>
<path d="M714.5 192.5V675.5M825.5 192.5V675.5M935.5 192.5V675.5M1046.5 192.5V675.5M604.5 246.5H1156.5M604.5 317.5H1156.5M604.5 387.5H1156.5M604.5 458.5H1156.5M604.5 528.5H1156.5M604.5 599.5H1156.5M604.5 669.5H1156.5" stroke="#dedede" stroke-width="1" fill="none"></path>
<clipPath id="axc"><rect x="604.5" y="192.5" width="552.0" height="483.0"></rect></clipPath>
<g clip-path="url(#axc)" fill="none" stroke-linejoin="round">
<path d="M604.5 283.3L605.0 283.2L605.6 283.0L606.1 282.7L606.7 282.3L607.2 281.8L607.7 281.1L608.3 280.4L608.8 279.6L609.4 278.8L609.9 277.9L610.4 277.0L611.0 276.0L611.5 275.0L612.0 274.0L612.6 273.1L613.1 272.1L613.7 271.2L614.2 270.4L614.7 269.5L615.3 268.7L615.8 268.0L616.4 267.4L616.9 266.8L617.4 266.2L618.0 265.8L618.5 265.4L619.1 265.1L619.6 264.8L620.1 264.6L620.7 264.5L621.2 264.5L621.8 264.5L622.3 264.6L622.8 264.8L623.4 265.0L623.9 265.2L624.4 265.5L625.0 265.9L625.5 266.3L626.1 266.8L626.6 267.3L627.1 267.8L627.7 268.4L628.2 269.0L628.8 269.6L629.3 270.3L629.8 271.0L630.4 271.7L630.9 272.5L631.5 273.3L632.0 274.2L632.5 275.0L633.1 275.9L633.6 276.9L634.1 277.9L634.7 278.9L635.2 279.9L635.8 281.0L636.3 282.2L636.8 283.4L637.4 284.6L637.9 285.9L638.5 287.3L639.0 288.6L639.5 290.1L640.1 291.6L640.6 293.1L641.2 294.7L641.7 296.3L642.2 298.0L642.8 299.7L643.3 301.4L643.9 303.2L644.4 305.0L644.9 306.8L645.5 308.6L646.0 310.3L646.5 312.1L647.1 313.8L647.6 315.5L648.2 317.2L648.7 318.8L649.2 320.3L649.8 321.7L650.3 323.0L650.9 324.2L651.4 325.3L651.9 326.3L652.5 327.1L653.0 327.8L653.6 328.4L654.1 328.9L654.6 329.2L655.2 329.3L655.7 329.4L656.2 329.3L656.8 329.0L657.3 328.7L657.9 328.3L658.4 327.7L658.9 327.0L659.5 326.3L660.0 325.5L660.6 324.5L661.1 323.6L661.6 322.5L662.2 321.4L662.7 320.2L663.3 318.9L663.8 317.6L664.3 316.3L664.9 314.9L665.4 313.4L666.0 311.9L666.5 310.4L667.0 308.9L667.6 307.3L668.1 305.7L668.6 304.0L669.2 302.4L669.7 300.8L670.3 299.1L670.8 297.5L671.3 295.8L671.9 294.2L672.4 292.6L673.0 291.0L673.5 289.5L674.0 287.9L674.6 286.4L675.1 285.0L675.7 283.6L676.2 282.2L676.7 280.9L677.3 279.7L677.8 278.4L678.4 277.3L678.9 276.2L679.4 275.2L680.0 274.2L680.5 273.3L681.0 272.4L681.6 271.6L682.1 270.9L682.7 270.2L683.2 269.6L683.7 269.0L684.3 268.4L684.8 268.0L685.4 267.5L685.9 267.2L686.4 266.8L687.0 266.5L687.5 266.3L688.1 266.0L688.6 265.9L689.1 265.7L689.7 265.6L690.2 265.5L690.8 265.5L691.3 265.5L691.8 265.5L692.4 265.6L692.9 265.7L693.4 265.9L694.0 266.1L694.5 266.3L695.1 266.6L695.6 266.9L696.1 267.2L696.7 267.7L697.2 268.1L697.8 268.7L698.3 269.3L698.8 269.9L699.4 270.6L699.9 271.4L700.5 272.2L701.0 273.2L701.5 274.1L702.1 275.2L702.6 276.3L703.1 277.5L703.7 278.7L704.2 280.0L704.8 281.4L705.3 282.8L705.8 284.2L706.4 285.7L706.9 287.2L707.5 288.8L708.0 290.3L708.5 291.9L709.1 293.4L709.6 294.9L710.2 296.3L710.7 297.7L711.2 299.0L711.8 300.2L712.3 301.3L712.9 302.3L713.4 303.2L713.9 303.9L714.5 304.5L715.0 304.9L715.5 305.1L716.1 305.2L716.6 305.2L717.2 304.9L717.7 304.6L718.2 304.1L718.8 303.5L719.3 302.9L719.9 302.1L720.4 301.2L720.9 300.3L721.5 299.4L722.0 298.4L722.6 297.4L723.1 296.4L723.6 295.3L724.2 294.3L724.7 293.4L725.2 292.4L725.8 291.4L726.3 290.5L726.9 289.7L727.4 288.8L727.9 288.0L728.5 287.2L729.0 286.5L729.6 285.8L730.1 285.1L730.6 284.4L731.2 283.8L731.7 283.2L732.3 282.6L732.8 282.0L733.3 281.4L733.9 280.8L734.4 280.2L735.0 279.6L735.5 279.0L736.0 278.4L736.6 277.8L737.1 277.2L737.6 276.5L738.2 275.9L738.7 275.3L739.3 274.6L739.8 273.9L740.3 273.3L740.9 272.6L741.4 272.0L742.0 271.3L742.5 270.7L743.0 270.0L743.6 269.4L744.1 268.8L744.7 268.1L745.2 267.5L745.7 267.0L746.3 266.4L746.8 265.9L747.4 265.3L747.9 264.8L748.4 264.3L749.0 263.9L749.5 263.4L750.0 262.9L750.6 262.5L751.1 262.1L751.7 261.7L752.2 261.2L752.7 260.8L753.3 260.4L753.8 260.0L754.4 259.6L754.9 259.2L755.4 258.8L756.0 258.3L756.5 257.9L757.1 257.4L757.6 257.0L758.1 256.5L758.7 256.1L759.2 255.6L759.8 255.1L760.3 254.6L760.8 254.1L761.4 253.6L761.9 253.1L762.4 252.6L763.0 252.1L763.5 251.6L764.1 251.1L764.6 250.6L765.1 250.1L765.7 249.6L766.2 249.1L766.8 248.6L767.3 248.1L767.8 247.7L768.4 247.2L768.9 246.7L769.5 246.3L770.0 245.8L770.5 245.3L771.1 244.9L771.6 244.4L772.1 243.9L772.7 243.4L773.2 242.9L773.8 242.3L774.3 241.8L774.8 241.2L775.4 240.6L775.9 240.0L776.5 239.4L777.0 238.8L777.5 238.1L778.1 237.4L778.6 236.7L779.2 236.0L779.7 235.3L780.2 234.6L780.8 233.9L781.3 233.1L781.9 232.4L782.4 231.7L782.9 231.0L783.5 230.3L784.0 229.6L784.5 228.9L785.1 228.3L785.6 227.6L786.2 227.0L786.7 226.4L787.2 225.9L787.8 225.4L788.3 224.9L788.9 224.4L789.4 224.0L789.9 223.5L790.5 223.1L791.0 222.7L791.6 222.4L792.1 222.0L792.6 221.7L793.2 221.3L793.7 221.0L794.2 220.6L794.8 220.3L795.3 219.9L795.9 219.6L796.4 219.2L796.9 218.7L797.5 218.3L798.0 217.8L798.6 217.3L799.1 216.8L799.6 216.3L800.2 215.7L800.7 215.1L801.3 214.5L801.8 213.9L802.3 213.2L802.9 212.6L803.4 211.9L804.0 211.3L804.5 210.7L805.0 210.0L805.6 209.5L806.1 208.9L806.6 208.4L807.2 207.9L807.7 207.5L808.3 207.2L808.8 206.9L809.3 206.7L809.9 206.6L810.4 206.5L811.0 206.6L811.5 206.7L812.0 206.9L812.6 207.3L813.1 207.7L813.7 208.3L814.2 208.9L814.7 209.7L815.3 210.5L815.8 211.5L816.4 212.6L816.9 213.8L817.4 215.0L818.0 216.4L818.5 217.9L819.0 219.4L819.6 221.0L820.1 222.7L820.7 224.5L821.2 226.3L821.7 228.1L822.3 230.0L822.8 231.8L823.4 233.6L823.9 235.5L824.4 237.2L825.0 238.9L825.5 240.6L826.1 242.1L826.6 243.5L827.1 244.8L827.7 245.9L828.2 247.0L828.8 247.8L829.3 248.5L829.8 249.1L830.4 249.5L830.9 249.7L831.4 249.8L832.0 249.8L832.5 249.7L833.1 249.5L833.6 249.3L834.1 248.9L834.7 248.6L835.2 248.1L835.8 247.7L836.3 247.3L836.8 246.9L837.4 246.5L837.9 246.1L838.5 245.8L839.0 245.5L839.5 245.3L840.1 245.1L840.6 245.0L841.1 245.0L841.7 245.0L842.2 245.0L842.8 245.1L843.3 245.2L843.8 245.4L844.4 245.6L844.9 245.8L845.5 246.1L846.0 246.3L846.5 246.6L847.1 246.9L847.6 247.1L848.2 247.4L848.7 247.6L849.2 247.8L849.8 247.9L850.3 248.1L850.9 248.2L851.4 248.2L851.9 248.2L852.5 248.2L853.0 248.1L853.5 248.0L854.1 247.9L854.6 247.7L855.2 247.5L855.7 247.3L856.2 247.1L856.8 246.9L857.3 246.7L857.9 246.5L858.4 246.3L858.9 246.1L859.5 246.0L860.0 245.9L860.6 245.8L861.1 245.7L861.6 245.6L862.2 245.6L862.7 245.7L863.2 245.7L863.8 245.8L864.3 245.9L864.9 246.0L865.4 246.2L865.9 246.4L866.5 246.5L867.0 246.7L867.6 246.9L868.1 247.1L868.6 247.3L869.2 247.4L869.7 247.6L870.3 247.7L870.8 247.8L871.3 247.8L871.9 247.9L872.4 247.9L873.0 247.8L873.5 247.8L874.0 247.7L874.6 247.6L875.1 247.5L875.6 247.3L876.2 247.1L876.7 246.9L877.3 246.8L877.8 246.6L878.3 246.4L878.9 246.2L879.4 246.1L880.0 246.0L880.5 245.9L881.0 245.8L881.6 245.7L882.1 245.7L882.7 245.7L883.2 245.8L883.7 245.9L884.3 246.0L884.8 246.1L885.4 246.3L885.9 246.5L886.4 246.7L887.0 246.9L887.5 247.1L888.0 247.3L888.6 247.5L889.1 247.7L889.7 247.9L890.2 248.0L890.7 248.1L891.3 248.1L891.8 248.2L892.4 248.1L892.9 248.0L893.4 247.9L894.0 247.7L894.5 247.5L895.1 247.3L895.6 247.0L896.1 246.7L896.7 246.3L897.1 246.7L897.7 245.7L898.2 244.9L898.7 244.3L899.3 243.8L899.8 243.5L900.4 243.4L900.9 243.5L901.4 243.8L902.0 244.2L902.5 244.8L903.1 245.5L903.6 246.3L904.1 247.2L904.7 248.6L905.2 250.4L905.7 252.6L906.3 255.0L906.8 257.6L907.4 260.5L907.9 263.9L908.4 267.8L909.0 272.0L909.5 276.5L910.1 281.6L910.6 287.4L911.1 294.7L911.7 304.2L912.2 315.6L912.8 329.6L913.3 349.1L913.8 372.1L914.4 389.7L914.9 398.3L915.5 430.3L916.0 627.0L916.5 433.7L917.1 397.0L917.6 380.2L918.2 364.2L918.7 353.2L919.2 347.5L919.8 343.2L920.3 340.4L920.8 339.9L921.4 341.7L921.9 344.8L922.5 348.5L923.0 354.1L923.5 367.2L924.1 390.7L924.6 411.3L925.2 452.1L925.7 664.7L926.2 456.9L926.8 412.3L927.3 381.8L927.9 362.1L928.4 347.5L928.9 334.4L929.5 321.1L930.0 303.8L930.6 291.8L931.1 285.5L931.6 280.5L932.2 275.8L932.7 271.6L933.3 267.9L933.8 264.6L934.3 261.6L934.9 258.8L935.4 256.4L935.9 254.3L936.5 252.6L937.0 251.2L937.6 249.9L938.1 248.8L938.6 247.9L939.2 247.0L939.7 246.1L940.3 245.3L940.8 244.7L941.3 244.2L941.9 244.0L942.4 244.0L943.0 244.1L943.5 244.3L944.0 244.5L944.6 244.8L945.1 245.0L945.7 245.3L946.2 245.5L946.7 245.7L947.3 245.9L947.8 246.1L948.4 246.4L948.9 246.6L949.4 246.8L950.0 247.0L950.5 247.2L951.0 247.3L951.6 247.4L952.1 247.5L952.7 247.5L953.2 247.5L953.7 247.5L954.3 247.5L954.8 247.4L955.4 247.4L955.9 247.3L956.4 247.2L957.0 247.0L957.5 246.9L957.9 247.0L958.4 247.0L958.9 246.9L959.5 246.8L960.0 246.7L960.6 246.7L961.1 246.6L961.6 246.6L962.2 246.5L962.7 246.5L963.2 246.5L963.8 246.5L964.3 246.5L964.9 246.5L965.4 246.5L965.9 246.5L966.5 246.5L967.0 246.6L967.6 246.6L968.1 246.6L968.6 246.7L969.2 246.7L969.7 246.8L970.3 246.8L970.8 246.8L971.3 246.9L971.9 246.9L972.4 246.9L972.9 246.9L973.5 246.9L974.0 247.0L974.6 247.0L975.1 247.0L975.6 247.0L976.2 247.0L976.7 246.9L977.3 246.9L977.8 246.9L978.3 246.9L978.9 246.9L979.4 246.9L980.0 246.9L980.5 246.8L981.0 246.8L981.6 246.8L982.1 246.8L982.7 246.8L983.2 246.8L983.7 246.8L984.3 246.7L984.8 246.7L985.3 246.7L985.9 246.7L986.4 246.7L987.0 246.7L987.5 246.7L988.0 246.7L988.6 246.7L989.1 246.7L989.7 246.7L990.2 246.7L990.7 246.7L991.3 246.8L991.8 246.8L992.4 246.8L992.9 246.8L993.4 246.8L994.0 246.8L994.5 246.8L995.1 246.8L995.6 246.8L996.1 246.8L996.7 246.8L997.2 246.8L997.7 246.8L998.3 246.8L998.8 246.8L999.4 246.8L999.9 246.8L1000.4 246.8L1001.0 246.8L1001.5 246.9L1002.1 246.9L1002.6 246.9L1003.1 246.9L1003.7 246.9L1004.2 246.9L1004.8 246.8L1005.3 246.8L1005.8 246.8L1006.4 246.8L1006.9 246.8L1007.4 246.8L1008.0 246.8L1008.5 246.8L1009.1 246.8L1009.6 246.8L1010.1 246.8L1010.7 246.8L1011.2 246.8L1011.8 246.8L1012.3 246.7L1012.8 246.7L1013.4 246.7L1013.9 246.7L1014.5 246.7L1015.0 246.7L1015.5 246.7L1016.1 246.7L1016.6 246.7L1017.2 246.7L1017.7 246.7L1018.2 246.7L1018.8 246.8L1019.3 246.8L1019.8 246.8L1020.4 246.8L1020.9 246.8L1021.5 246.8L1022.0 246.8L1022.5 246.8L1023.1 246.9L1023.6 246.9L1024.2 246.9L1024.7 246.9L1025.2 246.9L1025.8 246.9L1026.3 246.9L1026.9 246.9L1027.4 246.9L1027.9 246.9L1028.5 246.9L1029.0 246.9L1029.6 246.9L1030.1 246.9L1030.6 246.9L1031.2 246.8L1031.7 246.8L1032.2 246.8L1032.8 246.8L1033.3 246.8L1033.9 246.7L1034.4 246.7L1034.9 246.7L1035.5 246.7L1036.0 246.6L1036.6 246.6L1037.1 246.6L1037.6 246.6L1038.2 246.6L1038.7 246.6L1039.3 246.6L1039.8 246.6L1040.3 246.7L1040.9 246.7L1041.4 246.7L1041.9 246.8L1042.5 246.8L1043.0 246.9L1043.3 246.8L1045.0 246.9L1046.7 247.1L1048.3 248.1L1050.0 249.6L1051.6 251.5L1053.3 253.9L1054.9 255.9L1056.6 257.7L1058.2 259.5L1059.9 261.1L1061.6 262.8L1063.2 264.4L1064.9 265.9L1066.5 267.5L1068.2 269.0L1069.8 270.6L1071.5 272.1L1073.1 273.7L1074.8 275.4L1076.5 277.0L1078.1 278.6L1079.8 280.2L1081.4 281.7L1083.1 283.3L1084.7 285.0L1086.4 286.6L1088.1 288.2L1089.7 289.9L1091.4 291.6L1093.0 293.4L1094.7 295.2L1096.3 297.0L1098.0 298.9L1099.6 300.8L1101.3 302.7L1103.0 304.5L1104.6 306.4L1106.3 308.3L1107.9 310.2L1109.6 312.0L1111.2 313.9L1112.9 315.7L1114.5 317.4L1116.2 319.2L1117.9 320.9L1119.5 322.7L1121.2 324.4L1122.8 326.1L1124.5 327.7L1126.1 329.3L1127.8 330.8L1129.5 332.3L1131.1 333.8L1132.8 335.1L1134.4 336.4L1136.1 337.5L1137.7 338.6L1139.4 339.6L1141.0 340.5L1142.7 341.3L1144.4 342.1L1146.0 342.7L1147.7 343.4L1149.3 343.9L1151.0 344.4L1152.6 344.8L1154.3 345.2L1155.9 345.5L1156.5 345.6" stroke="#1673c0" stroke-width="1.05"></path>
<path d="M604.5 289.2L610.0 276.0L615.5 267.7L621.1 264.4L626.6 266.4L632.1 273.5L637.6 285.5L643.1 301.7L648.7 319.0L654.2 330.6L659.7 328.7L665.2 314.9L670.7 297.4L676.3 282.1L681.8 271.2L687.3 265.4L692.8 264.8L698.3 269.3L703.9 278.9L709.4 293.2L714.9 310.5L770.1 246.8L814.3 204.4L825.3 246.8L908.1 246.8L914.7 387.7L927.4 387.7L935.7 246.8L1046.1 246.8L1046.1 246.9L1047.8 247.7L1049.4 249.1L1051.1 250.8L1052.7 253.1L1054.4 255.3L1056.0 257.1L1057.7 258.9L1059.3 260.6L1061.0 262.2L1062.7 263.8L1064.3 265.4L1066.0 267.0L1067.6 268.5L1069.3 270.1L1070.9 271.6L1072.6 273.2L1074.3 274.8L1075.9 276.4L1077.6 278.0L1079.2 279.6L1080.9 281.2L1082.5 282.8L1084.2 284.4L1085.8 286.0L1087.5 287.7L1089.2 289.4L1090.8 291.1L1092.5 292.8L1094.1 294.6L1095.8 296.4L1097.4 298.3L1099.1 300.1L1100.7 302.0L1102.4 303.9L1104.1 305.8L1105.7 307.7L1107.4 309.6L1109.0 311.4L1110.7 313.3L1112.3 315.1L1114.0 316.9L1115.7 318.6L1117.3 320.4L1119.0 322.1L1120.6 323.8L1122.3 325.5L1123.9 327.2L1125.6 328.8L1127.2 330.3L1128.9 331.8L1130.6 333.3L1132.2 334.7L1133.9 336.0L1135.5 337.2L1137.2 338.3L1138.8 339.3L1140.5 340.2L1142.1 341.1L1143.8 341.8L1145.5 342.5L1147.1 343.2L1148.8 343.7L1150.4 344.2L1152.1 344.7L1153.7 345.1L1155.4 345.4L1156.5 345.6" stroke="#fa4f3d" stroke-opacity=".78" stroke-width="1.35" stroke-dasharray="10.5 5.5"></path>
</g>
<path d="M659.5 192.5v3M659.5 675.5v-3M714.5 192.5v6M714.5 675.5v-6M770.5 192.5v3M770.5 675.5v-3M825.5 192.5v6M825.5 675.5v-6M880.5 192.5v3M880.5 675.5v-3M935.5 192.5v6M935.5 675.5v-6M990.5 192.5v3M990.5 675.5v-3M1046.5 192.5v6M1046.5 675.5v-6M1101.5 192.5v3M1101.5 675.5v-3M604.5 204.5h3M1156.5 204.5h-3M604.5 218.5h3M1156.5 218.5h-3M604.5 232.5h3M1156.5 232.5h-3M604.5 246.5h6M1156.5 246.5h-6M604.5 260.5h3M1156.5 260.5h-3M604.5 274.5h3M1156.5 274.5h-3M604.5 289.5h3M1156.5 289.5h-3M604.5 303.5h3M1156.5 303.5h-3M604.5 317.5h6M1156.5 317.5h-6M604.5 331.5h3M1156.5 331.5h-3M604.5 345.5h3M1156.5 345.5h-3M604.5 359.5h3M1156.5 359.5h-3M604.5 373.5h3M1156.5 373.5h-3M604.5 387.5h6M1156.5 387.5h-6M604.5 401.5h3M1156.5 401.5h-3M604.5 415.5h3M1156.5 415.5h-3M604.5 430.5h3M1156.5 430.5h-3M604.5 444.5h3M1156.5 444.5h-3M604.5 458.5h6M1156.5 458.5h-6M604.5 472.5h3M1156.5 472.5h-3M604.5 486.5h3M1156.5 486.5h-3M604.5 500.5h3M1156.5 500.5h-3M604.5 514.5h3M1156.5 514.5h-3M604.5 528.5h6M1156.5 528.5h-6M604.5 542.5h3M1156.5 542.5h-3M604.5 556.5h3M1156.5 556.5h-3M604.5 570.5h3M1156.5 570.5h-3M604.5 585.5h3M1156.5 585.5h-3M604.5 599.5h6M1156.5 599.5h-6M604.5 613.5h3M1156.5 613.5h-3M604.5 627.5h3M1156.5 627.5h-3M604.5 641.5h3M1156.5 641.5h-3M604.5 655.5h3M1156.5 655.5h-3M604.5 669.5h6M1156.5 669.5h-6" stroke="#262626" stroke-width="1" fill="none"></path>
<rect x="604.5" y="192.5" width="552.0" height="483.0" fill="none" stroke="#262626" stroke-width="1"></rect>
<text transform="translate(599.3 250.2) scale(.9 1)" font-size="14" text-anchor="end">0</text>
<text transform="translate(599.3 321.2) scale(.9 1)" font-size="14" text-anchor="end">-10</text>
<text transform="translate(599.3 391.2) scale(.9 1)" font-size="14" text-anchor="end">-20</text>
<text transform="translate(599.3 462.2) scale(.9 1)" font-size="14" text-anchor="end">-30</text>
<text transform="translate(599.3 532.2) scale(.9 1)" font-size="14" text-anchor="end">-40</text>
<text transform="translate(599.3 603.2) scale(.9 1)" font-size="14" text-anchor="end">-50</text>
<text transform="translate(599.3 673.2) scale(.9 1)" font-size="14" text-anchor="end">-60</text>
<text transform="translate(604.5 692.4) scale(.88 1)" font-size="14" text-anchor="middle">0</text>
<text transform="translate(714.5 692.4) scale(.88 1)" font-size="14" text-anchor="middle">200</text>
<text transform="translate(825.5 692.4) scale(.88 1)" font-size="14" text-anchor="middle">400</text>
<text transform="translate(935.5 692.4) scale(.88 1)" font-size="14" text-anchor="middle">600</text>
<text transform="translate(1046.5 692.4) scale(.88 1)" font-size="14" text-anchor="middle">800</text>
<text x="880.5" y="187" font-size="14.67" text-anchor="middle" style="letter-spacing: 0.19px;">Magnitude Response (dB)</text>
<text x="880.5" y="710.5" font-size="14.67" text-anchor="middle" style="letter-spacing: 0.19px;">Frequency (Hz)</text>
<text transform="translate(569.4 433.5) rotate(-90)" font-size="14.67" text-anchor="middle" style="letter-spacing: 0.28px;">Magnitude (dB)</text>
</svg>
  <!-- filter info bar -->
  <div class="a" style="left:551px;top:723px;width:626px;height:23px;background:#fff;border-top:1px solid #c8c8c8;border-bottom:1px solid #c8c8c8"></div>
  <div class="a" style="left:551px;top:723px;width:144px;height:23px;background:#e8e8e8;border:1px solid #c2c2c2;border-left:none"></div>
  <div class="t" style="left: 559.5px; top: 727px; color: rgb(34, 34, 34); letter-spacing: -0.05px;">FILTER INFORMATION</div>
  <svg style="left:1161px;top:730px" width="12" height="9" viewBox="0 0 12 9"><path d="M0 1h12" stroke="#8e8e8e" stroke-width="1.8"></path><path d="M6 2.6L11.6 9H.4z" fill="#8e8e8e"></path></svg>

</div>
<div id="side" class="a">
  <div class="a" style="left:0;top:0;width:22px;height:139px;background:#e6e6e6;border-bottom:1px solid #bdbdbd"></div>
  <div class="t" style="left:3.5px;top:12px;transform-origin:0 0;transform:translate(16px,0) rotate(90deg);font-size:12px;color:#222">ANALYSIS OPTIONS</div>
  <svg style="left:7px;top:607px" width="10" height="12" viewBox="0 0 10 12"><path d="M1.2 0v12" stroke="#8e8e8e" stroke-width="2"></path><path d="M3 6L9.6.2v11.6z" fill="#8e8e8e"></path></svg>

</div>
<div id="status" class="a">
  <div class="t" style="right: 3.3px; top: 3px; font-size: 12px; letter-spacing: -0.01px;">Analysis Sample Rate = 2 kHz | Frequency Normalization = Unnormalized</div>
</div>


</body></html>
